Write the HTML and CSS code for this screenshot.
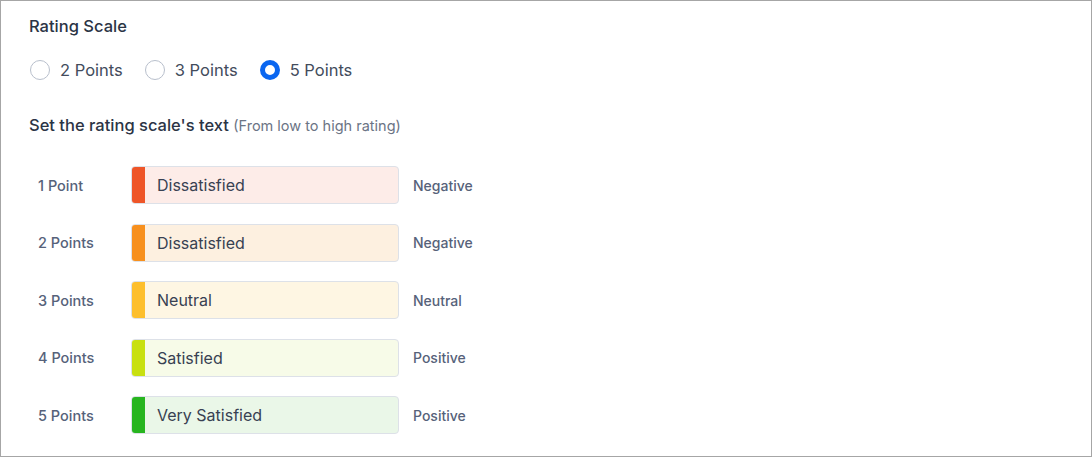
FILE: index.html
```html
<!DOCTYPE html>
<html lang="en">
<head>
<meta charset="utf-8">
<title>Rating Scale</title>
<link rel="stylesheet" href="styles.css">
</head>
<body>
<div class="panel">
  <h2 class="title">Rating Scale</h2>
  <div class="radios">
    <label class="radio"><span class="dot"></span>2 Points</label>
    <label class="radio"><span class="dot"></span>3 Points</label>
    <label class="radio"><span class="dot checked"></span>5 Points</label>
  </div>
  <h3 class="subtitle">Set the rating scale's text <span class="hint">(From low to high rating)</span></h3>
  <div class="rows">
    <div class="row">
      <span class="pt">1 Point</span>
      <div class="field c1"><span class="bar"></span><span class="val">Dissatisfied</span></div>
      <span class="sent">Negative</span>
    </div>
    <div class="row">
      <span class="pt">2 Points</span>
      <div class="field c2"><span class="bar"></span><span class="val">Dissatisfied</span></div>
      <span class="sent">Negative</span>
    </div>
    <div class="row">
      <span class="pt">3 Points</span>
      <div class="field c3"><span class="bar"></span><span class="val">Neutral</span></div>
      <span class="sent">Neutral</span>
    </div>
    <div class="row">
      <span class="pt">4 Points</span>
      <div class="field c4"><span class="bar"></span><span class="val">Satisfied</span></div>
      <span class="sent">Positive</span>
    </div>
    <div class="row">
      <span class="pt">5 Points</span>
      <div class="field c5"><span class="bar"></span><span class="val">Very Satisfied</span></div>
      <span class="sent">Positive</span>
    </div>
  </div>
</div>
</body>
</html>
```

FILE: styles.css
```css
* { box-sizing: border-box; }
html, body { margin: 0; padding: 0; background: #fff; }
body { font-family: Inter, Roboto, "Noto Sans", Arial, sans-serif; }
.panel {
  width: 1092px;
  height: 457px;
  border: 1px solid #a6a6a6;
  padding: 15px 0 0 28px;
}
.title {
  margin: 0;
  font-size: 16.5px;
  font-weight: 500;
  line-height: 20px;
  color: #2b3445;
}
.radios {
  display: flex;
  align-items: center;
  margin-top: 24px;
  height: 20px;
}
.radio {
  display: flex;
  align-items: center;
  font-size: 16.5px;
  color: #434c5c;
  margin-right: 21px;
}
.dot {
  width: 20px;
  height: 20px;
  border-radius: 50%;
  border: 1px solid #b8bfcc;
  margin-right: 10px;
  margin-left: 1px;
  background: #fff;
}
.dot.checked {
  border: 5px solid #0a66f0;
}
.subtitle {
  margin: 35px 0 0;
  font-size: 16.5px;
  font-weight: 500;
  line-height: 20px;
  color: #2b3445;
}
.hint {
  font-size: 14.5px;
  font-weight: 400;
  color: #6b7485;
}
.rows {
  margin-top: 30px;
  display: flex;
  flex-direction: column;
  gap: 19.5px;
}
.row {
  display: flex;
  align-items: center;
  height: 38px;
}
.pt {
  width: 102px;
  padding-left: 9px;
  font-size: 14.5px;
  font-weight: 500;
  color: #56627a;
}
.field {
  width: 268px;
  height: 38px;
  border: 1px solid #dde1e8;
  border-radius: 4px;
  display: flex;
  align-items: center;
  overflow: hidden;
}
.bar {
  width: 14px;
  align-self: stretch;
  margin: -1px 0 -1px -1px;
}
.val {
  padding-left: 12px;
  font-size: 16px;
  color: #384152;
}
.sent {
  margin-left: 14px;
  font-size: 14px;
  font-weight: 500;
  color: #56627a;
}
.c1 { background: #fdece8; } .c1 .bar { background: #ee5528; }
.c2 { background: #fdf0e0; } .c2 .bar { background: #f7901e; }
.c3 { background: #fef6e3; } .c3 .bar { background: #fdbf2d; }
.c4 { background: #f7fbe8; } .c4 .bar { background: #c8e010; }
.c5 { background: #eaf7e8; } .c5 .bar { background: #27b51f; }
```
